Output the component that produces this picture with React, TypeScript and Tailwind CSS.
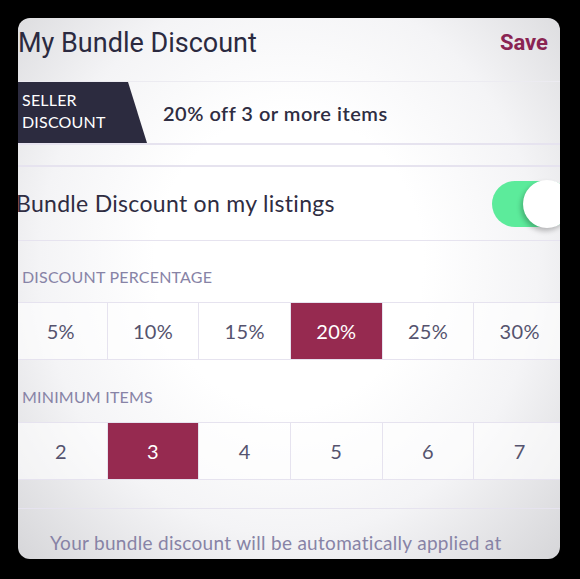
import React from 'react';

const percentages = ['5%', '10%', '15%', '20%', '25%', '30%'];
const items = ['2', '3', '4', '5', '6', '7'];

const Segmented: React.FC<{ options: string[]; selected: string }> = ({ options, selected }) => (
  <div className="grid grid-cols-6 h-[58px] border-y border-[#e6e3ef] bg-white/60">
    {options.map((o, i) => (
      <div
        key={o}
        className={`flex items-center justify-center text-[20px] tracking-[0.3px] ${i > 0 ? 'border-l border-[#e6e3ef]' : ''} ${
          o === selected ? 'bg-[#962a50] text-white border-[#c05080]' : 'text-[#55536e]'
        }`}
      >
        {o}
      </div>
    ))}
  </div>
);

export default function App() {
  return (
    <div className="w-[580px] h-[579px] bg-black pt-[18px] pl-[18px]">
      <div
        className="w-[542px] h-[541px] rounded-[12px] overflow-hidden bg-[radial-gradient(ellipse_at_50%_45%,#ffffff_35%,#f4f4f6_65%,#d6d6d9_100%)]"
        style={{ fontFamily: 'Lato, "Open Sans", sans-serif' }}
      >
        <div className="ml-[-3px] w-[550px]">
          {/* Header */}
          <div className="h-[64px] flex items-start justify-between pt-[7px] pl-[3px] pr-[17px] border-b border-[#ecebf1]">
            <h1 className="text-[27px] leading-[36px] text-[#2b2a40]" style={{ fontFamily: 'Roboto, sans-serif' }}>
              My Bundle Discount
            </h1>
            <button className="text-[22px] leading-[36px] font-bold text-[#8a2452]" style={{ fontFamily: 'Roboto, sans-serif' }}>
              Save
            </button>
          </div>

          {/* Seller discount */}
          <div className="h-[63px] flex items-stretch border-b-2 border-[#e6e3ef]">
            <div className="w-[132px] bg-[#2c2b3f] [clip-path:polygon(0_0,113px_0,100%_100%,0_100%)] flex flex-col justify-center pl-[7px] pb-[3px] text-white text-[16px] leading-[22px] tracking-[0.2px] uppercase">
              <span>Seller</span>
              <span>Discount</span>
            </div>
            <div className="flex items-center pl-[16px] text-[20px] tracking-[0.5px] font-semibold text-[#2f2d42]">
              20% off 3 or more items
            </div>
          </div>

          <div className="h-[22px] border-b-2 border-[#e6e3ef]" />

          {/* Toggle row */}
          <div className="h-[74px] flex items-center justify-between border-b border-[#e6e3ef]">
            <span className="text-[23px] tracking-[0.3px] text-[#2f2d42] pl-[1px]">Bundle Discount on my listings</span>
            <div className="relative w-[80px] h-[46px] rounded-full bg-[#5ceb9b] mr-[-7px]">
              <div className="absolute left-[31px] top-[-1px] w-[48px] h-[48px] rounded-full bg-white shadow-[-2px_3px_5px_rgba(0,0,0,0.25)]" />
            </div>
          </div>

          {/* Discount percentage */}
          <div className="h-[61px] flex items-end pb-[13px] pl-[7px] text-[16px] tracking-[0.2px] uppercase text-[#8783a6]">
            Discount Percentage
          </div>
          <Segmented options={percentages} selected="20%" />

          {/* Minimum items */}
          <div className="h-[62px] flex items-end pb-[13px] pl-[7px] text-[16px] tracking-[0.2px] uppercase text-[#8783a6]">
            Minimum Items
          </div>
          <Segmented options={items} selected="3" />

          <div className="h-[29px] border-b border-[#e6e3ef]" />

          <p className="pt-[20px] pl-[35px] text-[19px] tracking-[0.3px] text-[#8783a6] whitespace-nowrap">
            Your bundle discount will be automatically applied at
          </p>
        </div>
      </div>
    </div>
  );
}
